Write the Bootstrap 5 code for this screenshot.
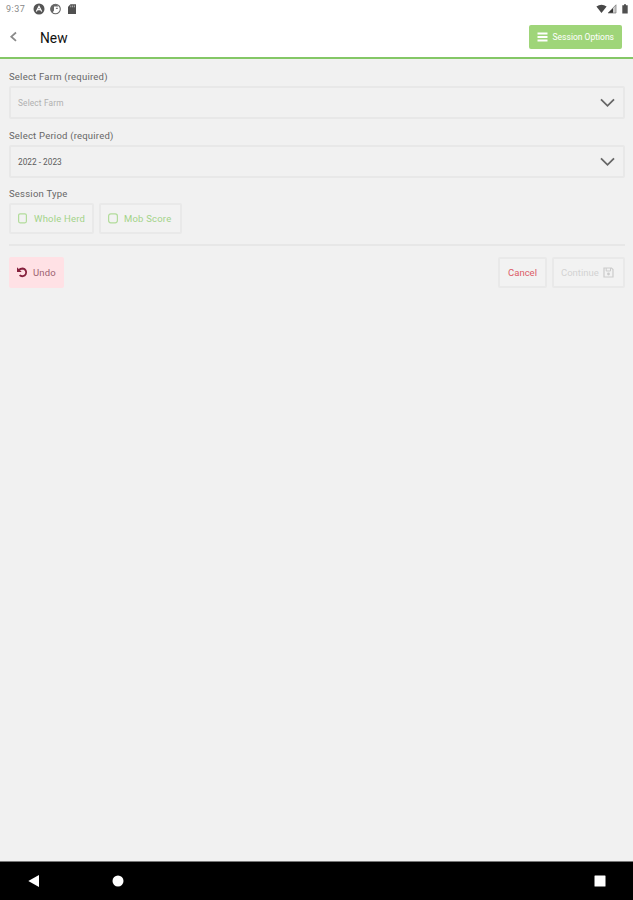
<!DOCTYPE html>
<html lang="en">
<head>
  <meta charset="UTF-8" />
  <meta name="viewport" content="width=device-width, initial-scale=1.0"/>
  <title>New Session</title>

  <!-- Bootstrap 5 CSS CDN -->
  <link href="https://cdn.jsdelivr.net/npm/bootstrap@5.3.3/dist/css/bootstrap.min.css" rel="stylesheet">
  <style>
    body {
      background-color: #f1f1f1;
      font-family: Roboto, 'Liberation Sans', sans-serif;
      font-size: 9.5px;
      line-height: 12px;
      color: #666;
    }

    svg {
      display: block;
      flex-shrink: 0;
    }

    .status-bar {
      height: 18px;
      padding: 0 4px 0 6px;
      color: #888;
    }

    .clock {
      width: 27px;
      font-size: 9px;
      letter-spacing: 0.5px;
    }

    .app-header {
      height: 41px;
      padding: 0 11px 1px 9px;
      border-bottom: 2px solid #84c766;
    }

    .page-title {
      margin-left: 22px;
      padding-top: 2px;
      font-size: 13.8px;
      line-height: 16px;
      color: #111;
    }

    .btn {
      --bs-btn-font-size: 9.5px;
      --bs-btn-line-height: 12px;
      --bs-btn-border-radius: 2px;
      --bs-btn-padding-x: 7px;
      --bs-btn-padding-y: 0;
      height: 31px;
      white-space: nowrap;
    }

    .btn-options {
      --bs-btn-font-size: 8.5px;
      --bs-btn-padding-x: 8px;
      width: 93px;
      height: 24px;
      background-color: #9fd579 !important;
      color: #fff !important;
    }

    .btn-line {
      border: 2px solid #e9e9e9 !important;
      background-color: #f2f2f2 !important;
    }

    .btn-type {
      gap: 6px;
      letter-spacing: 0.2px;
      color: #a3d389 !important;
    }

    .btn-herd {
      width: 85px;
    }

    .btn-mob {
      width: 83px;
    }

    .btn-undo {
      gap: 5px;
      width: 55px;
      letter-spacing: 0.2px;
      background-color: #ffe1e5 !important;
      color: #9b6170 !important;
    }

    .btn-cancel {
      width: 49px;
      color: #dc5b66 !important;
    }

    .btn-continue {
      gap: 4px;
      width: 73px;
      color: #d2d2d2 !important;
    }

    .form-area {
      padding: 12px 8px 0 9px;
    }

    .field-label {
      height: 12px;
      margin-bottom: 3px;
      letter-spacing: 0.22px;
    }

    .select-box {
      height: 33px;
      margin-bottom: 10.5px;
      padding: 1px 8px 0 7px;
      border: 2px solid #e8e8e8;
      border-radius: 2px;
      font-size: 8.3px;
      color: #5c5c5c;
    }

    .placeholder-text {
      letter-spacing: 0.15px;
      color: #b0b0b0;
    }

    .button-row {
      gap: 5px;
    }

    .divider {
      height: 2px;
      margin: 10px 0 11px;
      background-color: #e7e7e7;
    }

    .system-nav {
      height: 39px;
      padding: 0 27px 0 28px;
      background-color: #000;
      border-top: 1px solid #777;
    }

    .nav-home {
      margin-left: 72px;
    }
  </style>
</head>
<body class="d-flex flex-column vh-100 overflow-hidden">

  <!-- Status bar -->
  <div class="status-bar d-flex align-items-center bg-white">
    <span class="clock">9:37</span>
    <svg width="12" height="12" viewBox="0 0 12 12">
      <circle cx="6" cy="6" r="5.5" fill="#555"/>
      <path d="M3.3 8.5 6 3.4 8.7 8.5M4.7 7.2Q6 5.8 7.3 7.2" fill="none" stroke="#fff" stroke-width="1.2"/>
    </svg>
    <svg class="ms-1" width="13" height="12" viewBox="0 0 13 12">
      <circle cx="6.5" cy="6" r="4.8" fill="#fff" stroke="#666" stroke-width="1.1"/>
      <path d="M6.5 1.2A4.8 4.8 0 0 0 3.4 9.7L5 7.5V3.4H9.6A4.8 4.8 0 0 0 6.5 1.2Z" fill="#666"/>
      <path d="M6.8 6H8.8V4.8H7Z" fill="#777"/>
    </svg>
    <svg class="ms-1" width="12" height="12" viewBox="0 0 12 12">
      <path d="M4.5 1.2H10V11H2V3.7Z" fill="#505050"/>
      <path d="M4.8 2.5V4.3M6.6 2.5V4.3M8.4 2.5V4.3" stroke="#ccc" stroke-width=".8"/>
    </svg>
    <svg class="ms-auto" width="11" height="10" viewBox="0 0 11 10">
      <path d="M.4 2.5Q5.5-1 10.6 2.5L5.5 9Z" fill="#484848"/>
    </svg>
    <svg width="10" height="10" viewBox="0 0 10 10">
      <path d="M9 .8V9H1Z" fill="#ccc"/>
      <path d="M6 4V9H1Z" fill="#333"/>
      <path d="M9 .8V9H1Z" fill="none" stroke="#777" stroke-width=".7"/>
    </svg>
    <svg class="ms-1" width="8" height="10" viewBox="0 0 8 10">
      <path d="M3 .3H5V1.2H6.7V9.5H1.3V1.2H3Z" fill="#505050"/>
    </svg>
  </div>

  <!-- App header -->
  <header class="app-header d-flex align-items-center bg-white">
    <svg width="9" height="12" viewBox="0 0 9 12">
      <path d="M7 1.5 2.3 5.7 7 9.9" fill="none" stroke="#8a8a8a" stroke-width="1.8"/>
    </svg>
    <span class="page-title">New</span>
    <button class="btn btn-options ms-auto border-0 d-flex align-items-center" type="button">
      <svg width="11" height="10" viewBox="0 0 11 10">
        <path d="M.5 1.5H10.5M.5 5H10.5M.5 8.5H10.5" stroke="#fff" stroke-width="2"/>
      </svg>
      <span class="ms-auto">Session Options</span>
    </button>
  </header>

  <!-- Session form -->
  <main class="form-area flex-grow-1">
    <div class="field-label">Select Farm (required)</div>
    <div class="select-box d-flex align-items-center justify-content-between">
      <span class="placeholder-text">Select Farm</span>
      <svg width="15" height="10" viewBox="0 0 15 10">
        <path d="M1 1.3 7.5 7.8 14 1.3" fill="none" stroke="#666" stroke-width="1.8"/>
      </svg>
    </div>

    <div class="field-label">Select Period (required)</div>
    <div class="select-box d-flex align-items-center justify-content-between">
      <span>2022 - 2023</span>
      <svg width="15" height="10" viewBox="0 0 15 10">
        <path d="M1 1.3 7.5 7.8 14 1.3" fill="none" stroke="#666" stroke-width="1.8"/>
      </svg>
    </div>

    <div class="field-label">Session Type</div>
    <div class="button-row d-flex">
      <button class="btn btn-line btn-type btn-herd d-flex align-items-center" type="button">
        <svg width="10" height="11" viewBox="0 0 10 11">
          <rect x=".6" y=".8" width="7.8" height="9" rx="1.5" fill="none" stroke="#b2dc9b" stroke-width="1.2"/>
        </svg>
        <span>Whole Herd</span>
      </button>
      <button class="btn btn-line btn-type btn-mob d-flex align-items-center" type="button">
        <svg width="10" height="11" viewBox="0 0 10 11">
          <rect x=".6" y=".8" width="8.8" height="9" rx="2.2" fill="none" stroke="#b2dc9b" stroke-width="1.2"/>
        </svg>
        <span>Mob Score</span>
      </button>
    </div>

    <div class="divider"></div>

    <!-- Form actions -->
    <div class="button-row d-flex">
      <button class="btn btn-undo border-0 d-flex align-items-center" type="button">
        <svg width="12" height="11" viewBox="0 0 12 11">
          <path d="M2.5 3.4Q4.2 1.5 6.8 1.5A3.9 3.9 0 1 1 3.6 8.2" fill="none" stroke="#86213d" stroke-width="1.8"/>
          <path d="M1 .3V5H5.7Z" fill="#86213d"/>
        </svg>
        <span>Undo</span>
      </button>
      <button class="btn btn-line btn-cancel ms-auto px-0" type="button">Cancel</button>
      <button class="btn btn-line btn-continue d-flex align-items-center" type="button">
        <span>Continue</span>
        <svg width="11" height="11" viewBox="0 0 11 11">
          <path d="M1 1H8.5L10 2.5V10H1Z" fill="none" stroke="#cbcbcb" stroke-width="1.2"/>
          <path d="M3.2 1V4H7.5V1" fill="none" stroke="#cbcbcb"/>
          <circle cx="5.5" cy="7" r="1.4" fill="#cbcbcb"/>
        </svg>
      </button>
    </div>
  </main>

  <!-- System navigation -->
  <footer class="system-nav d-flex align-items-center">
    <svg width="12" height="14" viewBox="0 0 12 14">
      <path d="M11 1V13L.3 7Z" fill="#fff"/>
    </svg>
    <svg class="nav-home" width="12" height="12" viewBox="0 0 12 12">
      <circle cx="6" cy="6" r="5.5" fill="#fff"/>
    </svg>
    <svg class="ms-auto" width="12" height="12" viewBox="0 0 12 12">
      <rect x=".5" y=".5" width="11" height="11" rx=".5" fill="#fff"/>
    </svg>
  </footer>

  <!-- Bootstrap JS Bundle -->
  <script src="https://cdn.jsdelivr.net/npm/bootstrap@5.3.3/dist/js/bootstrap.bundle.min.js"></script>
</body>
</html>
